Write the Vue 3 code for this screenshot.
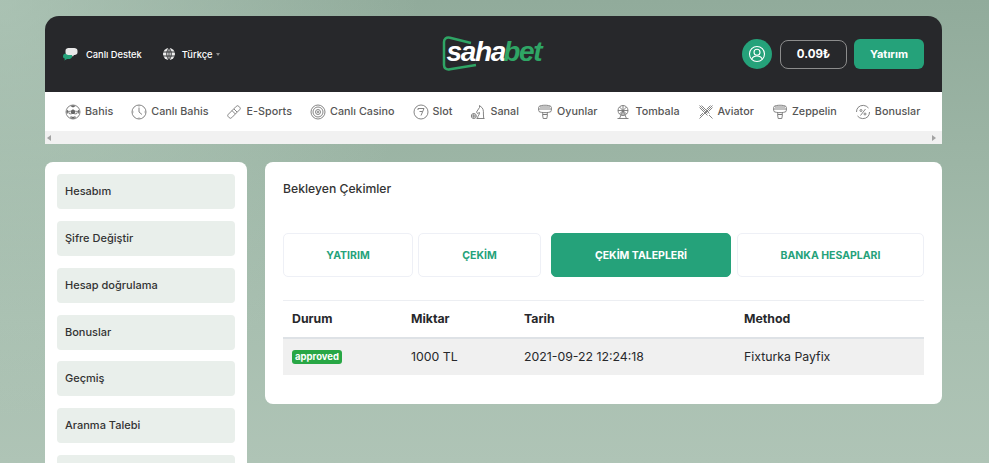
<script setup>
const ball = ['M8 1a7 7 0 1 0 0 14A7 7 0 0 0 8 1Z', 'M2 6.500l1.700 1 .3 2M14 6.500l-1.700 1-.3 2M5.500 14l.8-2M10.500 14l-.8-2M5.400 7.100 3.700 7.500M10.600 7.100l1.700.4M6.400 10.100l-2.400-.6M9.600 10.100l2.400-.6']
const ballFill = 'M8 5.200l2.600 1.900-1 3H6.400l-1-3ZM8 1.200c-1 0-2 .3-2.800.8L8 3.400l2.800-1.400C10 1.500 9 1.200 8 1.200ZM1.300 7.500l1.700-2 .2 2-.9 2.500c-.6-.7-1-1.600-1-2.500ZM14.700 7.500l-1.700-2-.2 2 .9 2.500c.6-.7 1-1.600 1-2.500ZM6 14.500l.6-1.800h2.800l.6 1.800c-1.300.3-2.700.3-4 0Z'
const zep = ['M2 2.500C4 .8 12 .8 14 2.500c.6.500.6 4 0 5-2 1.500-10 1.500-12 0-.6-1-.6-4.500 0-5Z', 'M1.700 5h12.600M3 3h10M5.500 8.500l.5 2h4l.5-2M5.500 10.500h5l-.7 4H6.200Z']
const nav = [
  { label: 'Bahis', paths: ball, fill: ballFill },
  { label: 'Canlı Bahis', paths: ['M8 1a7 7 0 1 0 0 14A7 7 0 0 0 8 1Z', 'M8 3.500V8l3 2.500', 'M8 1.500v1M14.500 8h-1M1.500 8h1M8 14.500v-1'] },
  { label: 'E-Sports', paths: ['M2.300 10.300l8-8a1.800 1.800 0 0 1 2.500 0l.9.9a1.800 1.800 0 0 1 0 2.500l-8 8a1.800 1.800 0 0 1-2.500 0l-.9-.9a1.800 1.800 0 0 1 0-2.500Z', 'M6 6.600l3.400 3.400M8 5l3 3M4.500 10.500h.01M6 12h.01'] },
  { label: 'Canlı Casino', paths: ['M8 1a7 7 0 1 0 0 14A7 7 0 0 0 8 1Z', 'M8 3a5 5 0 1 0 0 10A5 5 0 0 0 8 3Z', 'M8 5.500a2.500 2.500 0 1 0 0 5 2.500 2.500 0 0 0 0-5Z', 'M8 6.800v2.400M6.800 8h2.400'] },
  { label: 'Slot', paths: ['M8 1a7 7 0 1 0 0 14A7 7 0 0 0 8 1Z', 'M5 4.500h6l-3 7', 'M5 4.500v1.500M6.500 7.500h3'] },
  { label: 'Sanal', paths: ['M6.500 14.500h8M7.500 14.500c0-3 2.500-4 2-6L7.500 9.500 6.500 8l3-4.500V1.500l1.500 1.300c2 1 2.700 4 2.400 7.200l.3 4.500', 'M3.800 9.500a2.500 2.500 0 1 0 0 5 2.500 2.500 0 0 0 0-5Z', 'M3.800 9.500v5M1.300 12h5'] },
  { label: 'Oyunlar', paths: zep },
  { label: 'Tombala', paths: ['M8 1.500a5 5 0 1 0 0 10 5 5 0 0 0 0-10Z', 'M8 1.500v10M3 6.500h10M4.500 3l7 7M11.500 3l-7 7', 'M8 6.500l-3.500 8M8 6.500l3.500 8M2.500 14.500h11'] },
  { label: 'Aviator', paths: ['M1.500 1.500l8 8M3.500 1.500l8 8M1.500 3.500l8 8M11 11l3.500 3.500', 'M14.500 1.500l-13 13M12.500 1.500l-4 4M14.500 3.500l-4 4M5 9l-3 3'] },
  { label: 'Zeppelin', paths: zep },
  { label: 'Bonuslar', paths: ['M3 3.500A7 7 0 0 1 13.500 4M13 12.500A7 7 0 0 1 2.500 12M1.500 8A7 7 0 0 1 3 3.500M14.500 8a7 7 0 0 1-1.500 4.500', 'M10.500 5l-5 6.500', 'M6 5.500a1 1 0 1 0 0 2 1 1 0 0 0 0-2ZM10 9a1 1 0 1 0 0 2 1 1 0 0 0 0-2Z'] }
]
const menu = ['Hesabım', 'Şifre Değiştir', 'Hesap doğrulama', 'Bonuslar', 'Geçmiş', 'Aranma Talebi', '']
const tabs = ['YATIRIM', 'ÇEKİM', 'ÇEKİM TALEPLERİ', 'BANKA HESAPLARI']
</script>

<template>
  <div class="page">
    <header class="shell">
      <div class="top">
        <div class="top-left">
          <a class="support">
            <svg class="chat" viewBox="0 0 16 14" width="16" height="14">
              <path class="chat-green" d="M1 9.500C1 7.500 2 6.500 4 6.500h4c2 0 2.500 2 2 3.500-.5 1.500-2 2-3.500 2H5l-2.500 1.500.3-1.900C1.500 11.200 1 10.500 1 9.500Z" />
              <path class="chat-white" d="M3.500 3.800C3.500 2 4.800 1 6.500 1h5.700C14 1 15.500 2 15.500 3.800v1.400c0 1.800-1.300 2.800-3 2.800H12l-1.200 1.800-1-1.800H6.500C4.800 8 3.500 7 3.500 5.200Z" />
            </svg>
            <span>Canlı Destek</span>
          </a>
          <a class="lang">
            <svg viewBox="0 0 12 12" width="12" height="12">
              <circle class="globe-fill" cx="6" cy="6" r="6" />
              <path class="globe-line" d="M0 4h12M0 8h12M6 0C3 3 3 9 6 12M6 0c3 3 3 9 0 12M6 0v12" />
            </svg>
            <span>Türkçe</span>
            <i class="caret"></i>
          </a>
        </div>
        <div class="logo">
          <svg class="logo-frame" viewBox="0 0 36 36" width="36" height="36">
            <path d="M29 7 8 1.800C4 1 2 3 2 6v23c0 3 2 5 6 4.200L34 29" />
          </svg>
          <span class="logo-text"><span>saha</span><b>bet</b></span>
        </div>
        <div class="top-right">
          <span class="avatar">
            <svg viewBox="0 0 18 18" width="18" height="18">
              <circle cx="9" cy="9" r="7.500" />
              <circle cx="9" cy="7.300" r="3" />
              <path d="M3.800 14c1-2.200 2.800-3 5.200-3s4.200.8 5.200 3" />
            </svg>
          </span>
          <span class="balance">0.09₺</span>
          <a class="deposit">Yatırım</a>
        </div>
      </div>
      <nav class="nav">
        <a v-for="item in nav" :key="item.label" class="nav-item">
          <svg viewBox="0 0 16 16" width="16" height="16">
            <path v-if="item.fill" class="icon-fill" :d="item.fill" />
            <path v-for="d in item.paths" :key="d" :d="d" />
          </svg>
          <span>{{ item.label }}</span>
        </a>
      </nav>
      <div class="scrollbar">
        <i class="arrow left"></i>
        <i class="arrow right"></i>
      </div>
    </header>

    <div class="content">
      <aside class="side">
        <a v-for="(m, i) in menu" :key="i" class="side-item">{{ m }}</a>
      </aside>
      <main class="panel">
        <h1 class="title">Bekleyen Çekimler</h1>
        <div class="tabs">
          <a v-for="(t, i) in tabs" :key="t" class="tab" :class="{ active: i === 2 }">{{ t }}</a>
        </div>
        <table class="table">
          <thead>
            <tr>
              <th>Durum</th>
              <th>Miktar</th>
              <th>Tarih</th>
              <th>Method</th>
            </tr>
          </thead>
          <tbody>
            <tr>
              <td><span class="badge">approved</span></td>
              <td>1000 TL</td>
              <td>2021-09-22 12:24:18</td>
              <td>Fixturka Payfix</td>
            </tr>
          </tbody>
        </table>
      </main>
    </div>
  </div>
</template>

<style>
html, body { margin: 0; height: 100%; overflow: hidden; }
</style>

<style scoped>
.page {
  box-sizing: border-box;
  width: 989px;
  height: 463px;
  overflow: hidden;
  padding: 16px 47px 0 45px;
  font-family: Inter, "Liberation Sans", sans-serif;
  background:
    radial-gradient(circle at 0 0, rgba(190,212,198,.55) 0, rgba(190,212,198,0) 420px),
    linear-gradient(180deg, #91ab9b 0%, #9cb5a5 35%, #a8bfb0 70%, #afc4b6 100%);
}
.shell { border-radius: 14px 14px 0 0; overflow: hidden; }
.top {
  display: grid;
  grid-template-columns: 1fr auto 1fr;
  align-items: center;
  height: 76px;
  background: #27282b;
  padding: 0 18px;
}
.top-left { display: flex; align-items: center; gap: 21px; color: #fff; font-size: 9.300px; font-weight: 500; }
.support, .lang { display: flex; align-items: center; }
.support { gap: 8px; }
.lang { gap: 7px; }
.chat { margin-left: -1px; }
.chat-green { fill: #25a27a; }
.chat-white { fill: #e8e8e8; }
.globe-fill { fill: #eee; }
.globe-line { fill: none; stroke: #27282b; stroke-width: .9; }
.caret {
  width: 0; height: 0; margin-left: -4px;
  border: 2.500px solid transparent;
  border-top: 3px solid #8a8a8a;
  border-bottom: 0;
}
.logo { position: relative; width: 104px; height: 36px; display: flex; align-items: center; }
.logo-frame { position: absolute; left: 0; top: 0; }
.logo-frame path { fill: none; stroke: #2fa565; stroke-width: 2.500; }
.logo-text {
  position: relative;
  margin-left: 5px;
  padding-bottom: 4px;
  font: italic 700 28px/1 "Liberation Sans", sans-serif;
  letter-spacing: -1.300px;
  color: #fff;
}
.logo-text b { color: #2fa565; margin-left: -2px; }
.top-right { display: flex; align-items: center; justify-content: flex-end; gap: 8px; }
.avatar {
  width: 30px; height: 30px; border-radius: 50%;
  background: #25a27a;
  display: flex; align-items: center; justify-content: center;
}
.avatar svg { fill: none; stroke: #fff; stroke-width: 1.100; }
.balance {
  box-sizing: border-box;
  width: 67px; height: 29px;
  border: 1px solid #8c8c8c; border-radius: 8px;
  display: flex; align-items: center; justify-content: center;
  color: #fff; font-size: 11.500px; font-weight: 700;
}
.deposit {
  width: 70px; height: 30px; margin-left: -1px;
  background: #25a27a; border-radius: 6px;
  display: flex; align-items: center; justify-content: center;
  color: #fff; font-size: 11px; font-weight: 700;
}
.nav {
  display: flex;
  align-items: center;
  gap: 18px;
  height: 39px;
  padding-left: 20px;
  background: #fff;
  white-space: nowrap;
  overflow: hidden;
}
.nav-item { display: flex; align-items: center; gap: 4px; color: #555; font-size: 10.750px; font-weight: 500; letter-spacing: .03px; }
.nav-item svg { flex: none; fill: none; stroke: #777; stroke-width: .9; }
.nav-item svg .icon-fill { fill: #666; stroke: none; }
.scrollbar {
  height: 13px;
  background: #f1f1f1;
  display: flex;
  align-items: center;
  justify-content: space-between;
  padding: 0 6px 0 2px;
}
.arrow { width: 0; height: 0; border: 3px solid transparent; }
.arrow.left { border-left: 0; border-right: 4px solid #a3a3a3; }
.arrow.right { border-right: 0; border-left: 4px solid #a3a3a3; }
.content { display: flex; align-items: flex-start; gap: 18px; margin-top: 18px; }
.side {
  box-sizing: border-box;
  width: 202px;
  flex: none;
  background: #fff;
  border-radius: 8px;
  padding: 12px;
  display: flex;
  flex-direction: column;
  gap: 11.850px;
}
.side-item {
  box-sizing: border-box;
  flex: none;
  display: flex; align-items: center;
  height: 35px;
  padding: 0 0 1px 8px;
  background: #e9efeb;
  border-radius: 4px;
  color: #333;
  font-size: 11px;
  font-weight: 500;
}
.panel {
  box-sizing: border-box;
  flex: 1;
  height: 242px;
  background: #fff;
  border-radius: 8px;
  padding: 18px;
}
.title { margin: 0; font-size: 12.200px; line-height: 18px; font-weight: 500; color: #333; }
.tabs { display: flex; margin-top: 35px; }
.tab {
  box-sizing: border-box;
  height: 44px;
  display: flex; align-items: center; justify-content: center;
  border: 1px solid #eef0f6; border-radius: 5px;
  color: #25a27a; font-size: 10.500px; font-weight: 700;
}
.tab:nth-child(1) { width: 130px; margin-right: 5px; }
.tab:nth-child(2) { width: 123px; margin-right: 10px; }
.tab:nth-child(3) { width: 180px; margin-right: 6px; }
.tab:nth-child(4) { width: 187px; }
.tab.active { background: #25a27a; border-color: #25a27a; color: #fff; }
.table {
  width: 641px;
  margin-top: 23px;
  border-collapse: collapse;
  table-layout: fixed;
  color: #27282b;
  font-size: 12.300px;
}
th {
  box-sizing: border-box;
  height: 37px;
  padding: 0 9px;
  text-align: left;
  font-size: 12.300px;
  font-weight: 700;
  border-top: 1px solid #eceef2;
  border-bottom: 2px solid #dee2e6;
}
th:nth-child(1) { width: 119px; }
th:nth-child(2) { width: 113px; }
th:nth-child(3) { width: 220px; }
td { box-sizing: border-box; height: 37px; padding: 0 9px; background: #f0f0f0; font-weight: 400; }
.badge {
  display: inline-block;
  width: 50px;
  height: 14px;
  border-radius: 3px;
  background: #28a745;
  color: #fff;
  font-size: 9.500px;
  font-weight: 700;
  line-height: 14px;
  text-align: center;
  vertical-align: middle;
}
</style>
